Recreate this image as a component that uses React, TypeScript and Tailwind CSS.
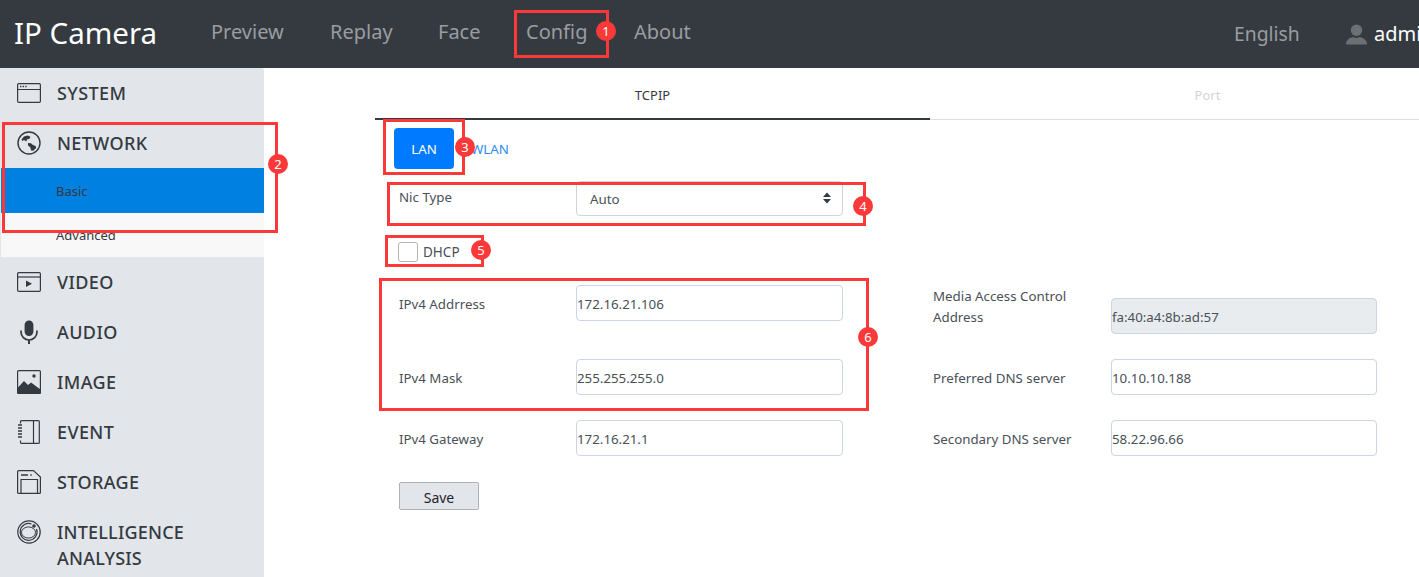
import React from "react";

const ink = "#343a40";

function IconSystem() {
  return (
    <svg width="24" height="20" viewBox="0 0 24 20" fill="none" stroke={ink} strokeWidth="1.2">
      <rect x="0.6" y="0.6" width="22.8" height="18.8" rx="1.2" />
      <path d="M1 6.5h22" />
      <path d="M3 3.5h1.4M5.6 3.5H7M8.2 3.5h1.4" strokeWidth="1.4" />
    </svg>
  );
}
function IconNetwork() {
  return (
    <svg width="24" height="24" viewBox="0 0 24 24" fill="none">
      <circle cx="12" cy="12" r="11" stroke={ink} strokeWidth="1.4" />
      <path d="M4.5 8.5 7 5.5l3.5-1 3 1.2-1.2 2.3-2.3.2-.6 2.3-2.4-1.4-1.6.8z" fill={ink} />
      <path d="M11 12l3 .2 1.6 1.6 3 1.2.6 2-3 2.8-2.2-.2-.6-3-2.4-2z" fill={ink} />
    </svg>
  );
}
function IconVideo() {
  return (
    <svg width="24" height="20" viewBox="0 0 24 20" fill="none" stroke={ink} strokeWidth="1.2">
      <rect x="0.6" y="0.6" width="22.8" height="18.8" rx="1.2" />
      <path d="M1 5h22" />
      <path d="M9 8.5v6.5l6-3.2z" fill={ink} stroke="none" />
    </svg>
  );
}
function IconAudio() {
  return (
    <svg width="18" height="24" viewBox="0 0 18 24" fill="none">
      <rect x="4.6" y="0.4" width="8.8" height="15.6" rx="4.4" fill={ink} />
      <path d="M1 10.5v1.5a8 8 0 0 0 16 0v-1.5" stroke={ink} strokeWidth="1.7" />
      <path d="M9 20v4" stroke={ink} strokeWidth="2" />
    </svg>
  );
}
function IconImage() {
  return (
    <svg width="24" height="24" viewBox="0 0 24 24" fill="none">
      <rect x="0.6" y="0.6" width="22.8" height="22.8" rx="1" stroke={ink} strokeWidth="1.2" />
      <path d="M0.5 18 7 11l4 4 3-2.5 9.5 7V24H0.5z" fill={ink} />
      <circle cx="17" cy="6" r="1.7" fill={ink} />
    </svg>
  );
}
function IconEvent() {
  return (
    <svg width="22" height="24" viewBox="0 0 22 24" fill="none" stroke={ink}>
      <path d="M2.5 3.5V1.6q0-1 1-1h16.800q1 0 1 1v20.800q0 1-1 1H3.500q-1 0-1-1v-2" strokeWidth="1.2" />
      <path d="M15.500 1v22" strokeWidth="1.200" />
      <path d="M0 5h4M0 8h4M0 11h4M0 14h4M0 17h4" strokeWidth="1.300" />
    </svg>
  );
}
function IconStorage() {
  return (
    <svg width="24" height="24" viewBox="0 0 24 24" fill="none" stroke={ink} strokeWidth="1.2">
      <path d="M1.600.6H16.500L23.400 7v15.400q0 1-1 1H1.600q-1 0-1-1V1.600q0-1 1-1z" />
      <path d="M4 23.500V9.500h16.500v14" />
      <path d="M4 5h7M14 4.200v1.600" strokeWidth="1.400" />
    </svg>
  );
}
function IconIntel() {
  return (
    <svg width="24" height="24" viewBox="0 0 24 24" fill="none" stroke={ink}>
      <circle cx="12" cy="12" r="11.200" strokeWidth="1.200" />
      <path d="M19.500 9a8.400 8.400 0 1 1-5-5" strokeWidth="1.200" />
      <ellipse cx="11.500" cy="12.500" rx="7" ry="5.600" strokeWidth="1.000" />
      <circle cx="17" cy="6" r="1.800" fill={ink} stroke="none" />
    </svg>
  );
}

function MenuRow({ icon, children }: { icon: React.ReactNode; children: React.ReactNode }) {
  return (
    <div className="flex h-[50px] items-center">
      <div className="ml-[17px] flex w-[24px] shrink-0 justify-center">{icon}</div>
      <div className="ml-[16px] text-[18px] font-medium leading-[26px] tracking-[0.4px] text-[#343a40]">{children}</div>
    </div>
  );
}

function Badge({ n, className }: { n: number; className: string }) {
  return (
    <div className={`absolute flex h-[20px] w-[20px] items-center justify-center rounded-full bg-[#fb3939] text-[13px] leading-none text-white ${className}`}>
      {n}
    </div>
  );
}

function Box({ className }: { className: string }) {
  return <div className={`absolute border-[3px] border-[#fb3939] ${className}`} />;
}

function Field({ label, value, className = "" }: { label: string; value: string; className?: string }) {
  return (
    <div className={`flex items-center ${className}`}>
      <div className="pt-[2px] text-[13.3px] leading-[21px] text-[#495057]">{label}</div>
      <input
        readOnly
        value={value}
        className="ml-auto h-[36px] w-[267px] rounded-[4px] border border-[#ced4e4] bg-white px-0 pt-[2px] text-[13.3px] text-[#495057] outline-none"
      />
    </div>
  );
}

export default function App() {
  return (
    <div className="relative h-[577px] w-[1419px] overflow-hidden bg-white font-['Noto_Sans','Open_Sans',sans-serif]">
      <header className="flex h-[68px] items-center overflow-hidden whitespace-nowrap bg-[#343a40]">
        <div className="ml-[14px] w-[142px] shrink-0 pb-[3px] text-[29.500px] leading-none text-white">IP Camera</div>
        <nav className="ml-[55px] flex shrink-0 pb-[4px] text-[20px] text-[#9a9da0]">
          <span className="w-[72px]">Preview</span>
          <span className="ml-[47px] w-[61px]">Replay</span>
          <span className="ml-[47px] w-[41px]">Face</span>
          <span className="ml-[47px] w-[61px]">Config</span>
          <span className="ml-[47px]">About</span>
        </nav>
        <span className="ml-auto w-[65px] shrink-0 text-[19.300px] text-[#9a9da0]">English</span>
        <svg className="ml-[47px] shrink-0" width="21" height="21" viewBox="0 0 22 22" fill="#6c7075">
          <circle cx="11" cy="6.500" r="6" />
          <path d="M0 21.500c0-5 3.500-7 7.500-8 2 1.500 5 1.500 7 0 4 1 7.500 3 7.500 8z" />
        </svg>
        <span className="ml-[7px] w-[45px] shrink-0 overflow-hidden text-[20px] text-white">admin</span>
      </header>

      <div className="flex">
        <aside className="h-[509px] w-[264px] shrink-0 overflow-hidden rounded-tr-[3px] bg-[#e2e5ea]">
          <MenuRow icon={<IconSystem />}>SYSTEM</MenuRow>
          <MenuRow icon={<IconNetwork />}>NETWORK</MenuRow>
          <div className="ml-px flex h-[45px] items-center bg-[#0080e0] pl-[55px] pt-[2px] text-[13px] text-[#343a40]">Basic</div>
          <div className="ml-px flex h-[44px] items-center bg-[#f8f8f8] pl-[55px] pt-[2px] text-[13px] text-[#343a40]">Advanced</div>
          <MenuRow icon={<IconVideo />}>VIDEO</MenuRow>
          <MenuRow icon={<IconAudio />}>AUDIO</MenuRow>
          <MenuRow icon={<IconImage />}>IMAGE</MenuRow>
          <MenuRow icon={<IconEvent />}>EVENT</MenuRow>
          <MenuRow icon={<IconStorage />}>STORAGE</MenuRow>
          <div className="flex items-start pt-[12px]">
            <div className="ml-[17px] flex w-[24px] shrink-0 justify-center pt-px"><IconIntel /></div>
            <div className="ml-[16px] text-[18px] font-medium leading-[26px] tracking-[0.2px] text-[#343a40]">INTELLIGENCE<br />ANALYSIS</div>
          </div>
        </aside>

        <main className="ml-[111px] min-w-0 flex-1">
          <div className="flex h-[52px] text-[13px]">
            <div className="flex w-[555px] shrink-0 items-center justify-center border-b-2 border-[#343a40] pt-[5px] text-[#343a40]">TCPIP</div>
            <div className="flex w-[555px] shrink-0 items-center justify-center border-b border-[#dedede] pt-[5px] text-[#d4d4d4]">Port</div>
          </div>

          <div className="ml-[19px] mt-[8px] flex items-center">
            <div className="flex h-[41px] w-[60px] items-center justify-center rounded-[4px] bg-[#007bff] pt-[2px] text-[13.300px] text-white">LAN</div>
            <div className="ml-[17px] pt-[2px] text-[13.300px] text-[#2b8bf3]">WLAN</div>
          </div>

          <div className="ml-[24px] mt-[12px] flex w-[444px] items-start">
            <div className="mt-[6px] text-[13.300px] leading-[21px] text-[#495057]">Nic Type</div>
            <div className="ml-auto flex h-[35px] w-[267px] items-center justify-between rounded-[4px] border border-[#ced4da] pl-[13px] pr-[11px] pt-[2px] text-[13.300px] text-[#495057]">
              <span>Auto</span>
              <svg width="8" height="12" viewBox="0 0 8 12" fill="#343a40" className="-mt-[4px]">
                <path d="M4 0.500 8 5H0zM4 11.500 0 7h8z" />
              </svg>
            </div>
          </div>

          <div className="ml-[23px] mt-[26px] flex items-center">
            <div className="h-[20px] w-[20px] rounded-[3px] border border-[#b5b5b5] bg-white" />
            <span className="ml-[5px] text-[13.500px] text-[#495057]">DHCP</span>
          </div>

          <div className="ml-[24px] flex">
            <div className="mt-[23px] flex w-[444px] flex-col">
              <Field label="IPv4 Addrress" value="172.16.21.106" />
              <Field label="IPv4 Mask" value="255.255.255.0" className="mt-[38px]" />
              <Field label="IPv4 Gateway" value="172.16.21.1" className="mt-[25px]" />
              <button className="mt-[26px] h-[28px] w-[80px] rounded-[2px] border border-[#adb0b5] bg-[#e2e5ea] pt-[2px] text-[14px] text-[#212529]">Save</button>
            </div>
            <div className="ml-[90px] mt-[24px] flex w-[444px] flex-col">
              <div className="flex items-start">
                <div className="w-[160px] text-[13.300px] leading-[21px] text-[#495057]">Media Access Control Address</div>
                <input readOnly value="fa:40:a4:8b:ad:57" className="ml-auto mt-[12px] h-[36px] w-[266px] rounded-[4px] border border-[#ced4e4] bg-[#e9ecef] px-0 pt-[2px] text-[13.300px] text-[#495057] outline-none" />
              </div>
              <Field label="Preferred DNS server" value="10.10.10.188" className="mt-[25px] [&>input]:w-[266px]" />
              <Field label="Secondary DNS server" value="58.22.96.66" className="mt-[25px] [&>input]:w-[266px]" />
            </div>
          </div>
        </main>
      </div>

      <Box className="left-[514px] top-[10px] h-[48px] w-[95px]" />
      <Badge n={1} className="left-[596px] top-[21px]" />
      <Box className="left-[2px] top-[122px] h-[111px] w-[276px]" />
      <Badge n={2} className="left-[268px] top-[154px]" />
      <Box className="left-[383px] top-[119px] h-[56px] w-[82px]" />
      <Badge n={3} className="left-[455px] top-[137px]" />
      <Box className="left-[387px] top-[182px] h-[44px] w-[479px]" />
      <Badge n={4} className="left-[853px] top-[196px]" />
      <Box className="left-[385px] top-[235px] h-[32px] w-[99px]" />
      <Badge n={5} className="left-[471px] top-[240px]" />
      <Box className="left-[379px] top-[278px] h-[133px] w-[490px]" />
      <Badge n={6} className="left-[858px] top-[327px]" />
    </div>
  );
}
